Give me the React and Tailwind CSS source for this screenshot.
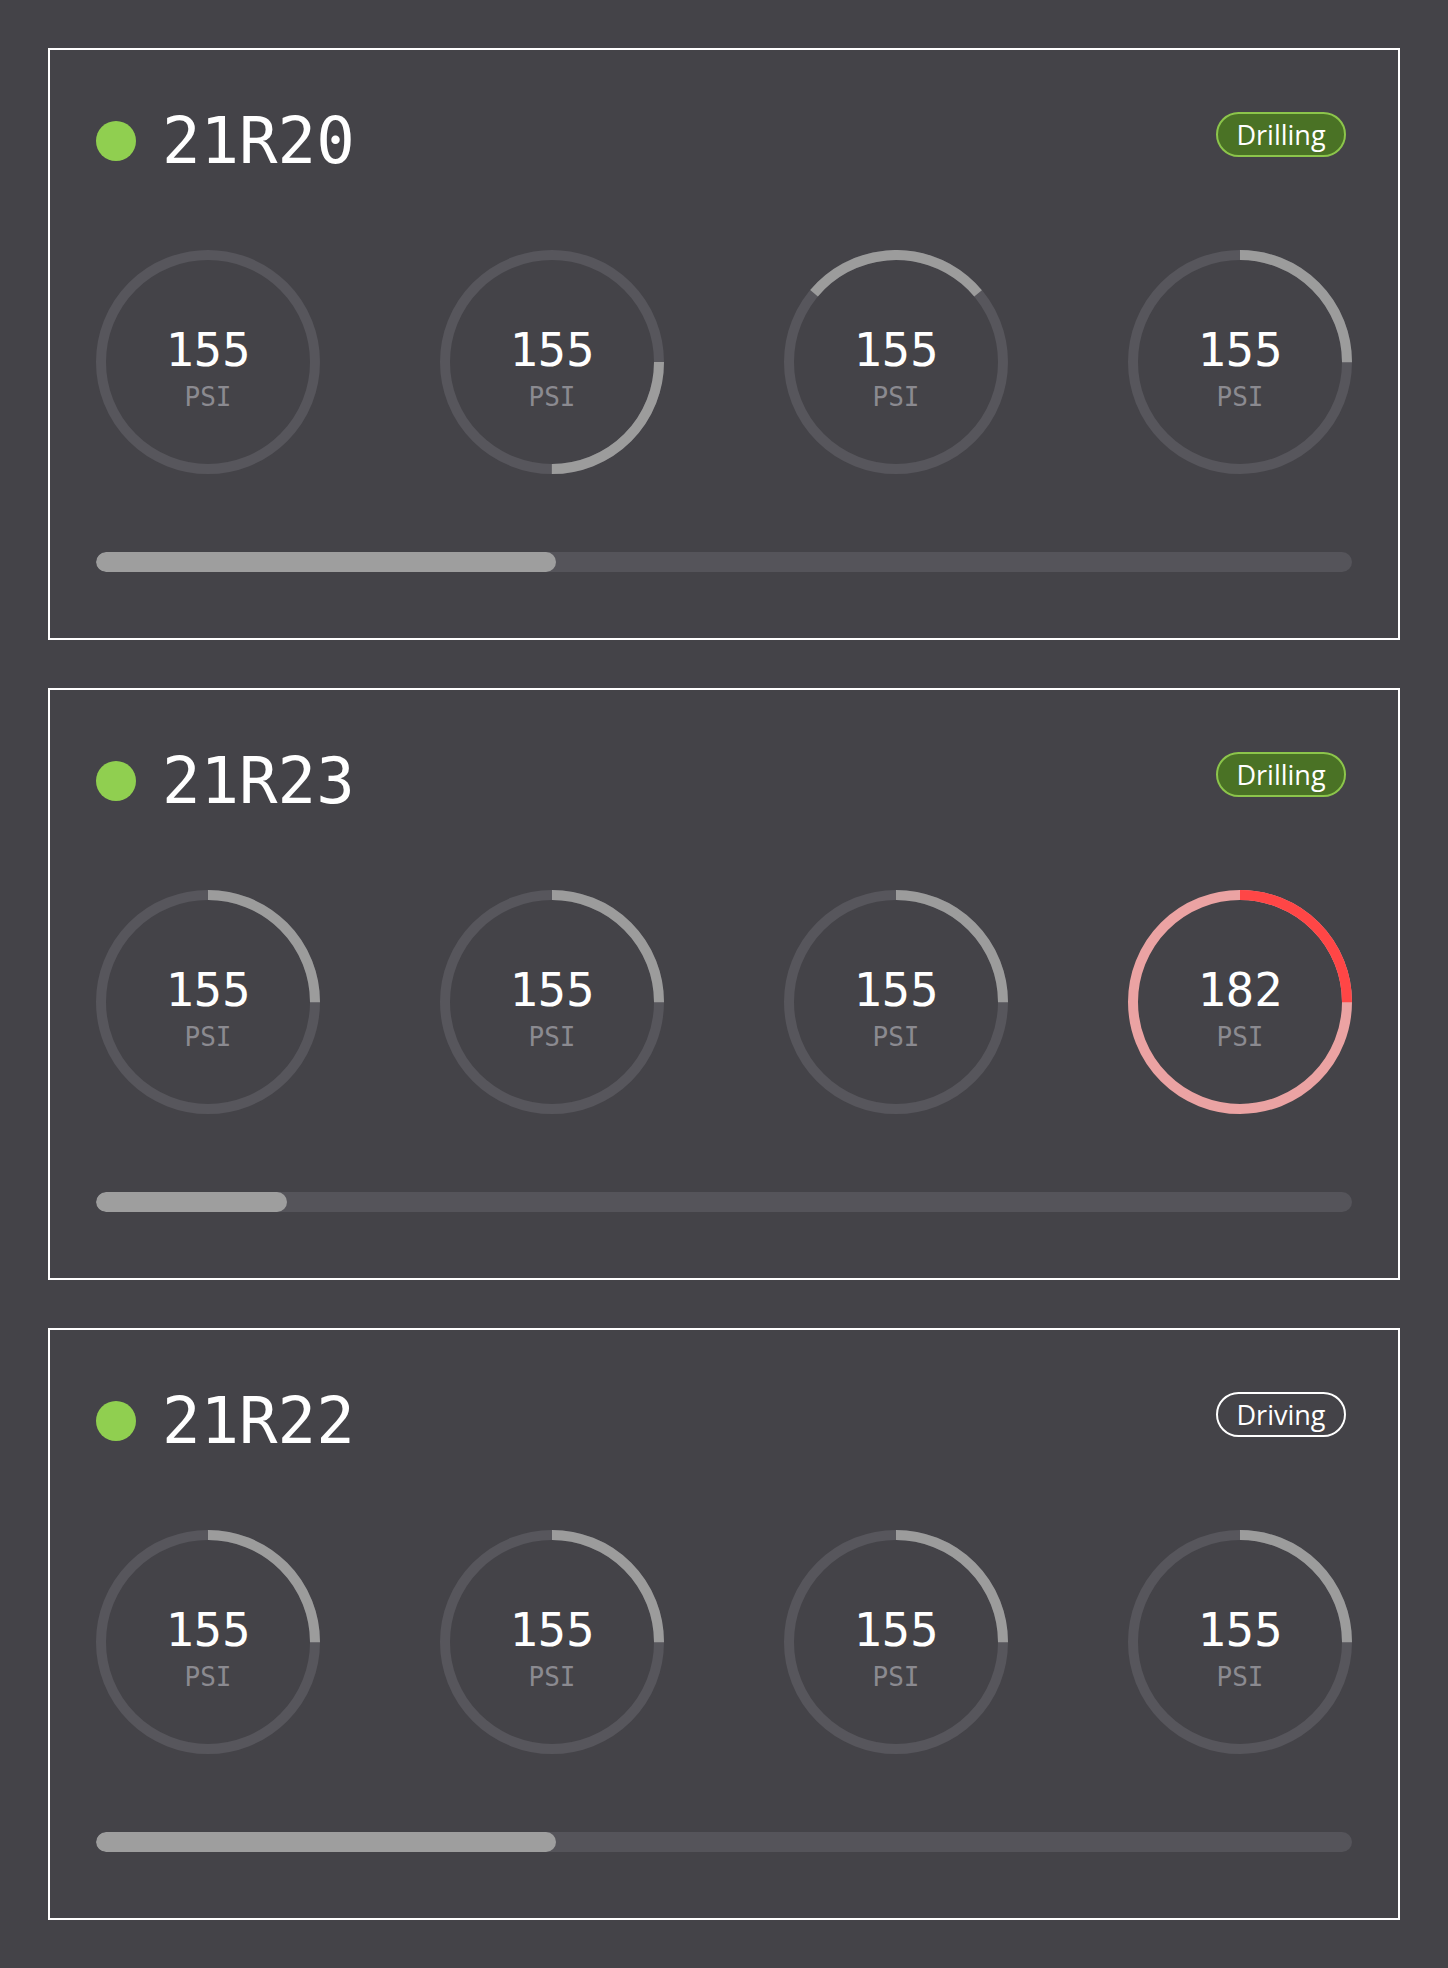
import React from 'react';

// Pressure gauge geometry (px)
const SIZE = 224;
const STROKE = 10;
const R = (SIZE - STROKE) / 2;
const CIRC = 2 * Math.PI * R;

const rigs = [
    {
        id: '21R20',
        status: 'Drilling',
        progress: 36.6,
        gauges: [
            { value: 155, from: 0, to: 0 },
            { value: 155, from: 90, to: 180 },
            { value: 155, from: -50, to: 50 },
            { value: 155, from: 0, to: 90 },
        ],
    },
    {
        id: '21R23',
        status: 'Drilling',
        progress: 15.2,
        gauges: [
            { value: 155, from: 0, to: 90 },
            { value: 155, from: 0, to: 90 },
            { value: 155, from: 0, to: 90 },
            { value: 182, from: 0, to: 90, alert: true },
        ],
    },
    {
        id: '21R22',
        status: 'Driving',
        progress: 36.6,
        gauges: [
            { value: 155, from: 0, to: 90 },
            { value: 155, from: 0, to: 90 },
            { value: 155, from: 0, to: 90 },
            { value: 155, from: 0, to: 90 },
        ],
    },
];

const Gauge = ({ value, from, to, alert }) => {
    const len = ((to - from) / 360) * CIRC;
    const track = alert ? '#eba3a3' : '#57565c';
    const arc = alert ? '#ff4646' : '#9c9c9c';

    return (
        <div className="relative w-[224px] h-[224px] shrink-0">
            <svg width={SIZE} height={SIZE} viewBox={`0 0 ${SIZE} ${SIZE}`} className="block">
                <circle cx={SIZE / 2} cy={SIZE / 2} r={R} fill="none" stroke={track} strokeWidth={STROKE} />
                {len > 0 && (
                    <circle
                        cx={SIZE / 2}
                        cy={SIZE / 2}
                        r={R}
                        fill="none"
                        stroke={arc}
                        strokeWidth={STROKE}
                        strokeDasharray={`${len} ${CIRC}`}
                        transform={`rotate(${-90 + from} ${SIZE / 2} ${SIZE / 2})`}
                    />
                )}
            </svg>
            <div className="absolute inset-0 flex flex-col items-center justify-center pt-[12px] font-['DejaVu_Sans_Mono',monospace]">
                <span className="text-[47px] leading-none text-white">{value}</span>
                <span className="mt-[11px] text-[26px] leading-none text-[#8b8a90]">PSI</span>
            </div>
        </div>
    );
};

const StatusBadge = ({ status }) => {
    const drilling = status === 'Drilling';
    return (
        <div
            className={`mt-[3px] mr-[6px] flex items-center justify-center w-[130px] h-[45px] rounded-full border-2 text-[27px] leading-none text-white font-['Open_Sans',sans-serif] ${
                drilling ? 'bg-[#4a7225] border-[#8cc54b]' : 'bg-transparent border-white'
            }`}
        >
            {status}
        </div>
    );
};

const RigCard = ({ rig }) => (
    <section className="border-2 border-white px-[46px] pt-[59px] pb-[66px]">
        <div className="flex items-start justify-between">
            <div className="flex items-center gap-[26px]">
                <span className="w-[40px] h-[40px] rounded-full bg-[#90cf50]" />
                <h2 className="font-['DejaVu_Sans_Mono',monospace] text-[64px] leading-none text-white">{rig.id}</h2>
            </div>
            <StatusBadge status={rig.status} />
        </div>

        <div className="mt-[77px] flex items-center justify-between">
            {rig.gauges.map((g, i) => (
                <Gauge key={i} {...g} />
            ))}
        </div>

        <div className="mt-[78px] h-[20px] rounded-full bg-[#55545a] overflow-hidden">
            <div className="h-full rounded-full bg-[#9e9e9e]" style={{ width: `${rig.progress}%` }} />
        </div>
    </section>
);

export default function App() {
    return (
        <div className="min-h-screen bg-[#444348] p-[48px] flex flex-col gap-[48px]">
            {rigs.map((rig) => (
                <RigCard key={rig.id} rig={rig} />
            ))}
        </div>
    );
}
